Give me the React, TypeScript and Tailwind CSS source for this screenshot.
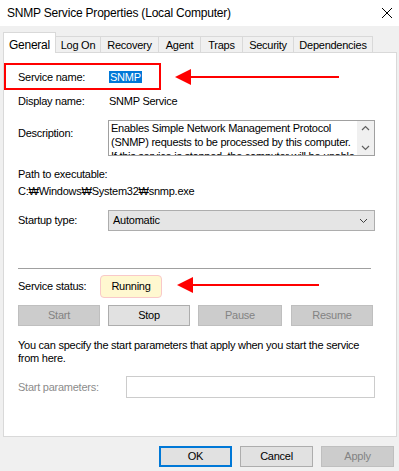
import React from "react";

const F = { fontFamily: '"Liberation Sans", Arial, sans-serif' };

function Tab({ label, w, selected }: { label: string; w: number; selected?: boolean }) {
  if (selected) {
    return (
      <div
        className="relative z-10 flex h-[21px] items-start justify-center border border-b-0 border-[#d9d9d9] bg-white pt-[3px] text-[12px] text-black"
        style={{ width: w }}
      >
        {label}
      </div>
    );
  }
  return (
    <div
      className="flex h-[17px] items-center justify-center border border-l-0 border-b-0 border-[#d9d9d9] bg-[#f0f0f0] text-[11px] text-black"
      style={{ width: w }}
    >
      {label}
    </div>
  );
}

function Btn({ label, disabled, w }: { label: string; disabled?: boolean; w: string }) {
  return (
    <div
      className={
        "flex h-[21px] items-center justify-center border text-[11px] " +
        w +
        (disabled ? " border-[#bfbfbf] bg-[#cccccc] text-[#838383]" : " border-[#adadad] bg-[#e1e1e1] text-black")
      }
    >
      {label}
    </div>
  );
}

export default function App() {
  return (
    <div className="relative h-[471px] w-[399px] overflow-hidden bg-[#f0f0f0] text-[11px] tracking-[-0.25px] text-black" style={F}>
      {/* title bar */}
      <div className="flex h-[26px] items-center justify-between bg-white pl-[7px] pr-[6px]">
        <span className="text-[12px] leading-none tracking-[-0.2px]">SNMP Service Properties (Local Computer)</span>
        <svg width="12" height="12" viewBox="0 0 12 12">
          <path d="M1 1 L11 11 M11 1 L1 11" stroke="#000" strokeWidth="1" />
        </svg>
      </div>

      {/* tabs */}
      <div className="flex h-[27px] items-end pl-[3px] pt-[7px]">
        <Tab label="General" w={53} selected />
        <Tab label="Log On" w={45} />
        <Tab label="Recovery" w={58} />
        <Tab label="Agent" w={42} />
        <Tab label="Traps" w={42} />
        <Tab label="Security" w={51} />
        <Tab label="Dependencies" w={79} />
      </div>

      {/* panel */}
      <div className="relative ml-[3px] -mt-[1px] h-[385px] w-[394px] border border-[#d9d9d9] bg-white">
        <div className="flex flex-col pl-[14px] pr-[20px]">
          <div className="mt-[14px] flex h-[20px] items-center">
            <span className="w-[91px]">Service name:</span>
            <span className="bg-[#0078d7] px-[1px] leading-[12px] text-white">SNMP</span>
          </div>
          <div className="mt-[4px] flex h-[20px] items-center">
            <span className="w-[91px]">Display name:</span>
            <span>SNMP Service</span>
          </div>
          <div className="mt-[9px] flex">
            <span className="mt-[5px] w-[90px]">Description:</span>
            <div className="flex h-[36px] w-[267px] overflow-hidden border border-[#a0a0a0]">
              <div className="flex-1 overflow-hidden pl-[2px] text-[11px] leading-[14px]">
                <div className="whitespace-nowrap">Enables Simple Network Management Protocol</div>
                <div className="whitespace-nowrap">(SNMP) requests to be processed by this computer.</div>
                <div className="whitespace-nowrap">If this service is stopped, the computer will be unable</div>
              </div>
              <div className="flex w-[17px] flex-col items-center justify-between bg-[#f0f0f0] py-[4px]">
                <svg width="9" height="6" viewBox="0 0 9 6">
                  <path d="M1 5 L4.5 1.5 L8 5" stroke="#606060" strokeWidth="1.2" fill="none" />
                </svg>
                <svg width="9" height="6" viewBox="0 0 9 6">
                  <path d="M1 1 L4.5 4.5 L8 1" stroke="#606060" strokeWidth="1.2" fill="none" />
                </svg>
              </div>
            </div>
          </div>
          <div className="mt-[10px] leading-[17px]">
            <div>Path to executable:</div>
            <div>C:₩Windows₩System32₩snmp.exe</div>
          </div>
          <div className="mt-[10px] flex h-[21px] items-center">
            <span className="w-[90px]">Startup type:</span>
            <div className="flex h-[21px] w-[267px] items-center justify-between border border-[#adadad] bg-[#e5e5e5] pl-[4px] pr-[6px]">
              <span>Automatic</span>
              <svg width="9" height="6" viewBox="0 0 9 6">
                <path d="M1 1 L4.5 4.5 L8 1" stroke="#404040" strokeWidth="1" fill="none" />
              </svg>
            </div>
          </div>
          <div className="mt-[37px] h-px w-[353px] bg-[#a0a0a0]" />
          <div className="mt-[6px] flex h-[23px] items-center">
            <span className="w-[82px]">Service status:</span>
            <div className="flex h-[23px] w-[62px] items-center justify-center rounded-[4px] border border-[#f9c9c9] bg-[#fff8d0]">
              Running
            </div>
          </div>
          <div className="mt-[7px] flex">
            <Btn label="Start" disabled w="w-[82px]" />
            <div className="w-[8px]" />
            <Btn label="Stop" w="w-[82px]" />
            <div className="w-[8px]" />
            <Btn label="Pause" disabled w="w-[84px]" />
            <div className="w-[9px]" />
            <Btn label="Resume" disabled w="w-[82px]" />
          </div>
          <div className="mt-[13px] leading-[13px]">
            <div className="whitespace-nowrap">You can specify the start parameters that apply when you start the service</div>
            <div>from here.</div>
          </div>
          <div className="mt-[11px] flex h-[22px] items-center">
            <span className="w-[108px] text-[#8c8c8c]">Start parameters:</span>
            <div className="h-[22px] w-[249px] border border-[#cccccc] bg-white" />
          </div>
        </div>
      </div>

      {/* bottom buttons */}
      <div className="mt-[9px] flex justify-end gap-[8px] pr-[5px]">
        <div className="flex h-[21px] w-[73px] items-center justify-center border-2 border-[#0078d7] bg-[#e1e1e1] text-[11px]">
          OK
        </div>
        <div className="flex h-[21px] w-[73px] items-center justify-center border border-[#adadad] bg-[#e1e1e1] text-[11px]">
          Cancel
        </div>
        <div className="flex h-[21px] w-[73px] items-center justify-center border border-[#bfbfbf] bg-[#cccccc] text-[11px] text-[#838383]">
          Apply
        </div>
      </div>

      {/* annotations */}
      <div className="absolute left-[4px] top-[63px] h-[27px] w-[157px] border-2 border-[#ff0000]" />
      <svg className="absolute left-0 top-0" width="399" height="471">
        <polygon points="175,77 191,69 191,85" fill="#ff0000" />
        <line x1="190" y1="77" x2="339" y2="77" stroke="#ff0000" strokeWidth="2" />
        <polygon points="177,285 193,277 193,293" fill="#ff0000" />
        <line x1="192" y1="285" x2="319" y2="285" stroke="#ff0000" strokeWidth="2" />
      </svg>
    </div>
  );
}
